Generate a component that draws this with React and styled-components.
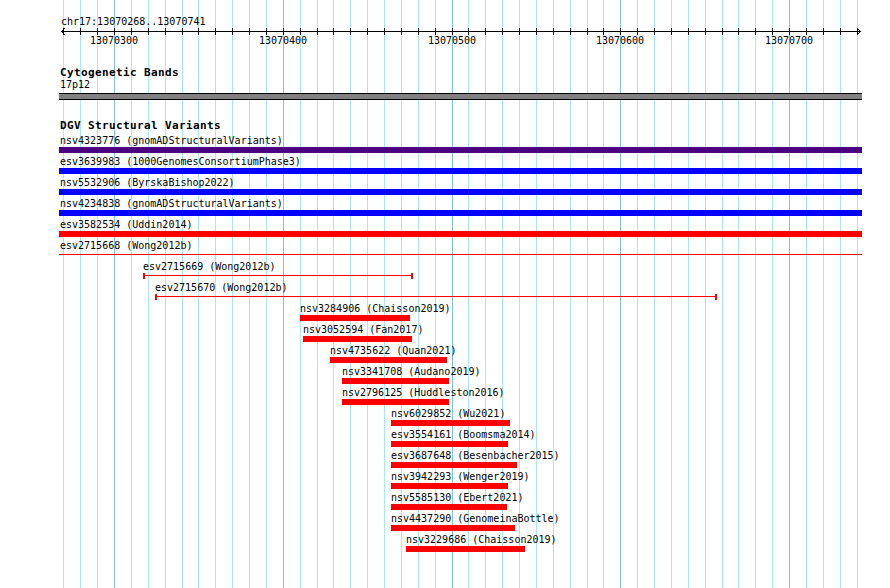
import React from "react";
import styled, { createGlobalStyle } from "styled-components";

const MONO = `"DejaVu Sans Mono", "Liberation Mono", monospace`;

const GlobalStyle = createGlobalStyle`
  html, body { margin: 0; padding: 0; background: #fff; }
  body { font-family: ${MONO}; }
`;

const PX_PER_BP = 1.6875;
const xOf = (bp) => Math.round(114 + (bp - 13070300) * PX_PER_BP);

const gridBps = [];
for (let n = 13070270; n <= 13070740; n += 10) gridBps.push(n);
const majorBps = gridBps.filter((n) => n % 100 === 0);

const VIEW_LEFT = 59;
const VIEW_RIGHT = 862;

const PURPLE = "#4b0082";
const BLUE = "#0000ff";
const RED = "#ff0000";

const features = [
  { id: "nsv4323776", study: "gnomADStructuralVariants", color: PURPLE, full: true },
  { id: "esv3639983", study: "1000GenomesConsortiumPhase3", color: BLUE, full: true },
  { id: "nsv5532906", study: "ByrskaBishop2022", color: BLUE, full: true },
  { id: "nsv4234838", study: "gnomADStructuralVariants", color: BLUE, full: true },
  { id: "esv3582534", study: "Uddin2014", color: RED, full: true },
  { id: "esv2715668", study: "Wong2012b", color: RED, full: true, thin: true },
  { id: "esv2715669", study: "Wong2012b", color: RED, from: 143, to: 413, thin: true },
  { id: "esv2715670", study: "Wong2012b", color: RED, from: 155, to: 717, thin: true },
  { id: "nsv3284906", study: "Chaisson2019", color: RED, from: 300, to: 410 },
  { id: "nsv3052594", study: "Fan2017", color: RED, from: 303, to: 412 },
  { id: "nsv4735622", study: "Quan2021", color: RED, from: 330, to: 447 },
  { id: "nsv3341708", study: "Audano2019", color: RED, from: 342, to: 449 },
  { id: "nsv2796125", study: "Huddleston2016", color: RED, from: 342, to: 449 },
  { id: "nsv6029852", study: "Wu2021", color: RED, from: 391, to: 510 },
  { id: "esv3554161", study: "Boomsma2014", color: RED, from: 391, to: 508 },
  { id: "esv3687648", study: "Besenbacher2015", color: RED, from: 391, to: 517 },
  { id: "nsv3942293", study: "Wenger2019", color: RED, from: 391, to: 508 },
  { id: "nsv5585130", study: "Ebert2021", color: RED, from: 391, to: 507 },
  { id: "nsv4437290", study: "GenomeinaBottle", color: RED, from: 391, to: 515 },
  { id: "nsv3229686", study: "Chaisson2019", color: RED, from: 406, to: 525 },
];

const Page = styled.div`
  position: relative;
  width: 890px;
  height: 588px;
  overflow: hidden;
  background: #fff;
  color: #000;
  font-family: ${MONO};
  font-size: 10px;
`;

const GridLayer = styled.svg`
  position: absolute;
  left: 0;
  top: 0;
  z-index: 0;
  display: block;
`;

const Content = styled.div`
  position: relative;
  z-index: 1;
  display: flex;
  flex-direction: column;
  padding-top: 16px;
`;

const LocationLabel = styled.div`
  margin-left: 61px;
  height: 12px;
  line-height: 12px;
  white-space: pre;
`;

const RulerSvg = styled.svg`
  display: block;
  overflow: visible;
`;

const RulerText = styled.text`
  font-family: ${MONO};
  font-size: 10px;
  fill: #000;
`;

const Track = styled.section`
  display: flex;
  flex-direction: column;
  margin-top: ${(p) => p.$gap}px;
`;

const TrackTitle = styled.div`
  margin-left: 60px;
  height: 12px;
  line-height: 12px;
  font-size: 11px;
  font-weight: bold;
  letter-spacing: 0.38px;
  white-space: pre;
`;

const BandName = styled.div`
  margin-left: 60px;
  height: 12px;
  line-height: 12px;
`;

const Band = styled.div`
  box-sizing: border-box;
  margin: 2px 0 0 ${VIEW_LEFT}px;
  width: ${VIEW_RIGHT - VIEW_LEFT}px;
  height: 7px;
  background: #808080;
  border-top: 1px solid #000;
  border-bottom: 1px solid #000;
`;

const FeatureList = styled.div`
  display: flex;
  flex-direction: column;
  margin-top: 3px;
`;

const FeatureRow = styled.div`
  display: flex;
  flex-direction: column;
  height: 21px;
`;

const FeatureLabel = styled.div`
  height: 12px;
  line-height: 12px;
  white-space: pre;
`;

const Bar = styled.div`
  height: 6px;
  background: ${(p) => p.$color};
`;

const ThinBar = styled.div`
  position: relative;
  box-sizing: border-box;
  height: 6px;
  border-left: ${(p) => (p.$caps ? `2px solid ${p.$color}` : "none")};
  border-right: ${(p) => (p.$caps ? `2px solid ${p.$color}` : "none")};

  &::before {
    content: "";
    position: absolute;
    left: 0;
    right: 0;
    top: 2px;
    height: 1px;
    background: ${(p) => p.$color};
  }
`;

function Grid() {
  return (
    <GridLayer width="890" height="588" viewBox="0 0 890 588">
      {gridBps.map((n) => {
        const x = xOf(n) + 0.5;
        const major = n % 100 === 0;
        return (
          <line
            key={n}
            x1={x}
            x2={x}
            y1="0"
            y2="588"
            stroke={major ? "#7ec3ea" : "#a8e8f2"}
            strokeWidth="1"
          />
        );
      })}
    </GridLayer>
  );
}

function Ruler() {
  return (
    <RulerSvg width="890" height="20" viewBox="0 0 890 20">
      <line x1="61" x2="861" y1="3.5" y2="3.5" stroke="#000" strokeWidth="1" />
      <polyline points="65,0 61.5,3.5 65,7" fill="none" stroke="#000" strokeWidth="1" />
      <polyline points="857,0 860.5,3.5 857,7" fill="none" stroke="#000" strokeWidth="1" />
      {gridBps.map((n) => {
        const x = xOf(n) + 0.5;
        return <line key={n} x1={x} x2={x} y1="0" y2="7" stroke="#000" strokeWidth="1" />;
      })}
      {majorBps.map((n) => (
        <RulerText key={n} x={xOf(n)} y="16" textAnchor="middle">
          {n}
        </RulerText>
      ))}
    </RulerSvg>
  );
}

function Feature({ f }) {
  const from = f.full ? VIEW_LEFT : f.from;
  const to = f.full ? VIEW_RIGHT : f.to;
  const labelX = f.full ? 60 : f.from;
  return (
    <FeatureRow>
      <FeatureLabel style={{ marginLeft: labelX }}>
        {f.id} ({f.study})
      </FeatureLabel>
      {f.thin ? (
        <ThinBar $color={f.color} $caps={!f.full} style={{ marginLeft: from, width: to - from }} />
      ) : (
        <Bar $color={f.color} style={{ marginLeft: from, width: to - from }} />
      )}
    </FeatureRow>
  );
}

export default function App() {
  return (
    <>
      <GlobalStyle />
      <Page>
        <Grid />
        <Content>
          <LocationLabel>chr17:13070268..13070741</LocationLabel>
          <Ruler />
          <Track $gap={19}>
            <TrackTitle>Cytogenetic Bands</TrackTitle>
            <BandName>17p12</BandName>
            <Band />
          </Track>
          <Track $gap={20}>
            <TrackTitle>DGV Structural Variants</TrackTitle>
            <FeatureList>
              {features.map((f) => (
                <Feature key={f.id} f={f} />
              ))}
            </FeatureList>
          </Track>
        </Content>
      </Page>
    </>
  );
}
